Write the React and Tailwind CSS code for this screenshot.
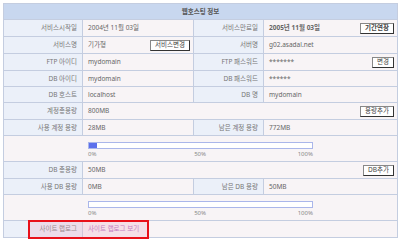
import React from "react";

const font = { fontFamily: '"Noto Sans", "Noto Sans CJK KR", sans-serif' };

function Label({ children }) {
  return (
    <div className="bg-[#ebf0f9] h-full flex items-center justify-end pr-[5px] text-[6.5px] text-[#777]">
      {children}
    </div>
  );
}

function Value({ children, span = "", className = "" }) {
  return (
    <div className={`bg-[#f8f4f6] h-full flex items-center pl-[5px] pr-[3px] text-[6.5px] text-[#666] ${span} ${className}`}>
      {children}
    </div>
  );
}

function Btn({ children }) {
  return (
    <span className="ml-auto inline-flex items-center h-[11px] px-[4px] bg-white border border-[#888] border-r-[#333] border-b-[#333] text-[6.5px] text-[#444] leading-none">
      {children}
    </span>
  );
}

function Progress({ pct }) {
  return (
    <div className="col-span-4 bg-[#f8f4f6] h-[25px] pl-[84px] pt-[6px]">
      <div className="w-[225px] h-[7px] border border-[#aab6ea] bg-white">
        <div className="h-full bg-[#5c70ec]" style={{ width: `${pct}%` }} />
      </div>
      <div className="w-[225px] flex justify-between text-[6px] text-[#888] mt-[1px] leading-[8px]">
        <span>0%</span>
        <span className="pl-[6px]">50%</span>
        <span>100%</span>
      </div>
    </div>
  );
}

export default function App() {
  return (
    <div className="w-[400px] h-[242px] bg-white relative" style={font}>
      <div className="absolute left-[3px] top-[3px] w-[395px] bg-[#c4cde0] p-px grid grid-cols-[78px_110px_69px_133px] gap-px auto-rows-auto">
        <div className="col-span-4 h-[15px] bg-[#c8d7ef] flex items-center justify-center text-[6.5px] font-bold text-[#555]">
          웹호스팅 정보
        </div>

        <div className="h-[16px]"><Label>서비스시작일</Label></div>
        <Value>2004년 11월 03일</Value>
        <Label>서비스만료일</Label>
        <Value className="font-bold text-[#333]">
          2005년 11월 03일<Btn>기간연장</Btn>
        </Value>

        <div className="h-[16px]"><Label>서비스명</Label></div>
        <Value>
          기가형<Btn>서비스변경</Btn>
        </Value>
        <Label>서버명</Label>
        <Value>g02.asadal.net</Value>

        <div className="h-[16px]"><Label>FTP 아이디</Label></div>
        <Value>mydomain</Value>
        <Label>FTP 패스워드</Label>
        <Value>
          *******<Btn>변경</Btn>
        </Value>

        <div className="h-[15px]"><Label>DB 아이디</Label></div>
        <Value>mydomain</Value>
        <Label>DB 패스워드</Label>
        <Value>******</Value>

        <div className="h-[15px]"><Label>DB 호스트</Label></div>
        <Value>localhost</Value>
        <Label>DB 명</Label>
        <Value>mydomain</Value>

        <div className="h-[16px]"><Label>계정총용량</Label></div>
        <Value span="col-span-3">
          800MB<Btn>용량추가</Btn>
        </Value>

        <div className="h-[15px]"><Label>사용 계정 용량</Label></div>
        <Value>28MB</Value>
        <Label>남은 계정 용량</Label>
        <Value>772MB</Value>

        <Progress pct={3.5} />

        <div className="h-[16px]"><Label>DB 총용량</Label></div>
        <Value span="col-span-3">
          50MB<Btn>DB추가</Btn>
        </Value>

        <div className="h-[15px]"><Label>사용 DB 용량</Label></div>
        <Value>0MB</Value>
        <Label>남은 DB 용량</Label>
        <Value>50MB</Value>

        <Progress pct={0} />

        <div className="h-[16px]"><Label>사이트 랩로그</Label></div>
        <Value span="col-span-3" className="text-[#b066c0]">사이트 랩로그 보기</Value>
      </div>
      <div className="absolute left-[28px] top-[220px] w-[121px] h-[19px] border-2 border-[#e8101a] bg-[#f0b0c8]/30" />
    </div>
  );
}
